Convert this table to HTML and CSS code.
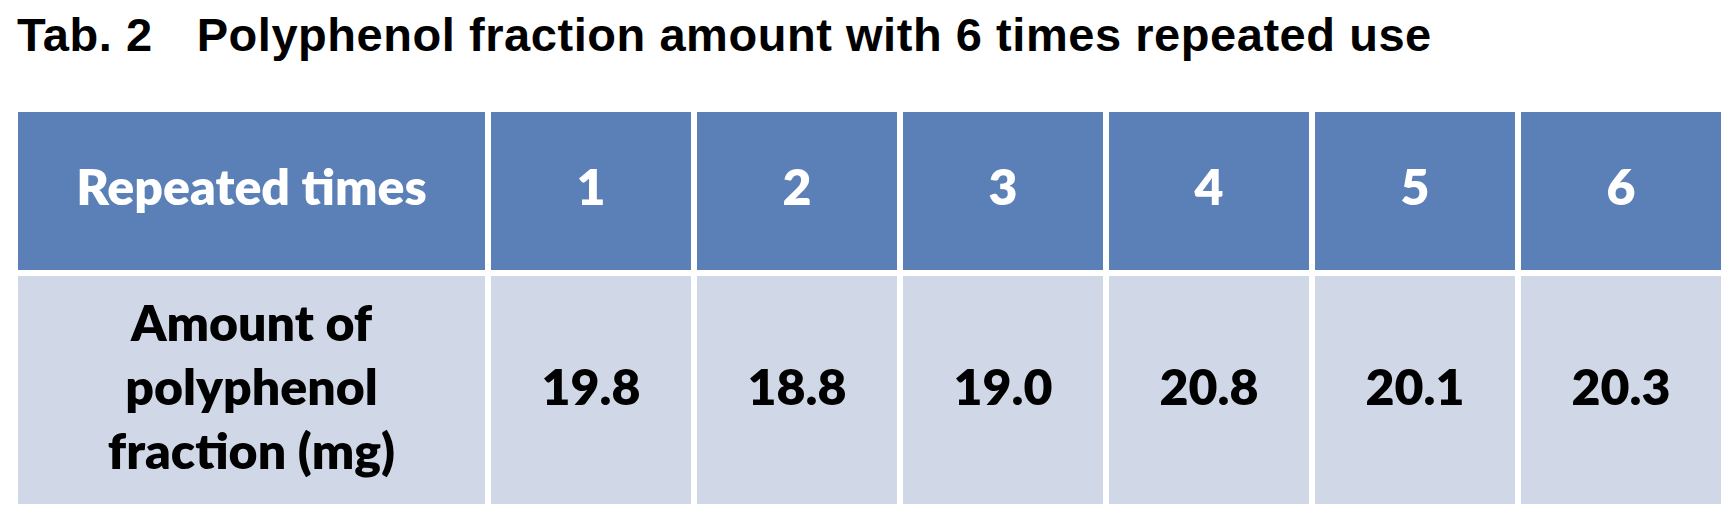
FILE: index.html
```html
<!DOCTYPE html>
<html lang="en">
<head>
<meta charset="utf-8">
<title>Tab. 2 Polyphenol fraction amount</title>
<link rel="stylesheet" href="styles.css">
</head>
<body>
<h1 class="caption"><span class="cap-num">Tab. 2</span><span class="cap-text">Polyphenol fraction amount with 6 times repeated use</span></h1>
<div class="table">
  <div class="cell head label">Repeated times</div>
  <div class="cell head">1</div>
  <div class="cell head">2</div>
  <div class="cell head">3</div>
  <div class="cell head">4</div>
  <div class="cell head">5</div>
  <div class="cell head">6</div>
  <div class="cell body label multi">Amount of<br>polyphenol<br>fraction (mg)</div>
  <div class="cell body">19.8</div>
  <div class="cell body">18.8</div>
  <div class="cell body">19.0</div>
  <div class="cell body">20.8</div>
  <div class="cell body">20.1</div>
  <div class="cell body">20.3</div>
</div>
</body>
</html>
```

FILE: styles.css
```css
html, body {
  margin: 0;
  padding: 0;
  background: #ffffff;
}

body {
  width: 1736px;
  height: 524px;
  overflow: hidden;
}

.caption {
  margin: 11px 0 0 17px;
  font-family: "Liberation Sans", Arial, sans-serif;
  font-weight: 700;
  font-size: 47px;
  line-height: 47px;
  letter-spacing: 0.55px;
  color: #000000;
  white-space: nowrap;
  display: flex;
}

.cap-text {
  margin-left: 44px;
}

.table {
  margin: 54px 0 0 18px;
  display: grid;
  grid-template-columns: 467px repeat(6, 200px);
  grid-template-rows: 158px 228px;
  gap: 6px;
}

.cell {
  display: flex;
  align-items: center;
  justify-content: center;
  text-align: center;
  font-family: Lato, "Open Sans", sans-serif;
  font-weight: 800;
  font-size: 50px;
  line-height: 1.2;
}

.head {
  background: #5b80b7;
  color: #ffffff;
  padding-bottom: 10px;
  box-sizing: border-box;
}

.body {
  background: #d0d8e7;
  color: #000000;
  padding-bottom: 9px;
  box-sizing: border-box;
}

.multi {
  line-height: 64px;
}
```
